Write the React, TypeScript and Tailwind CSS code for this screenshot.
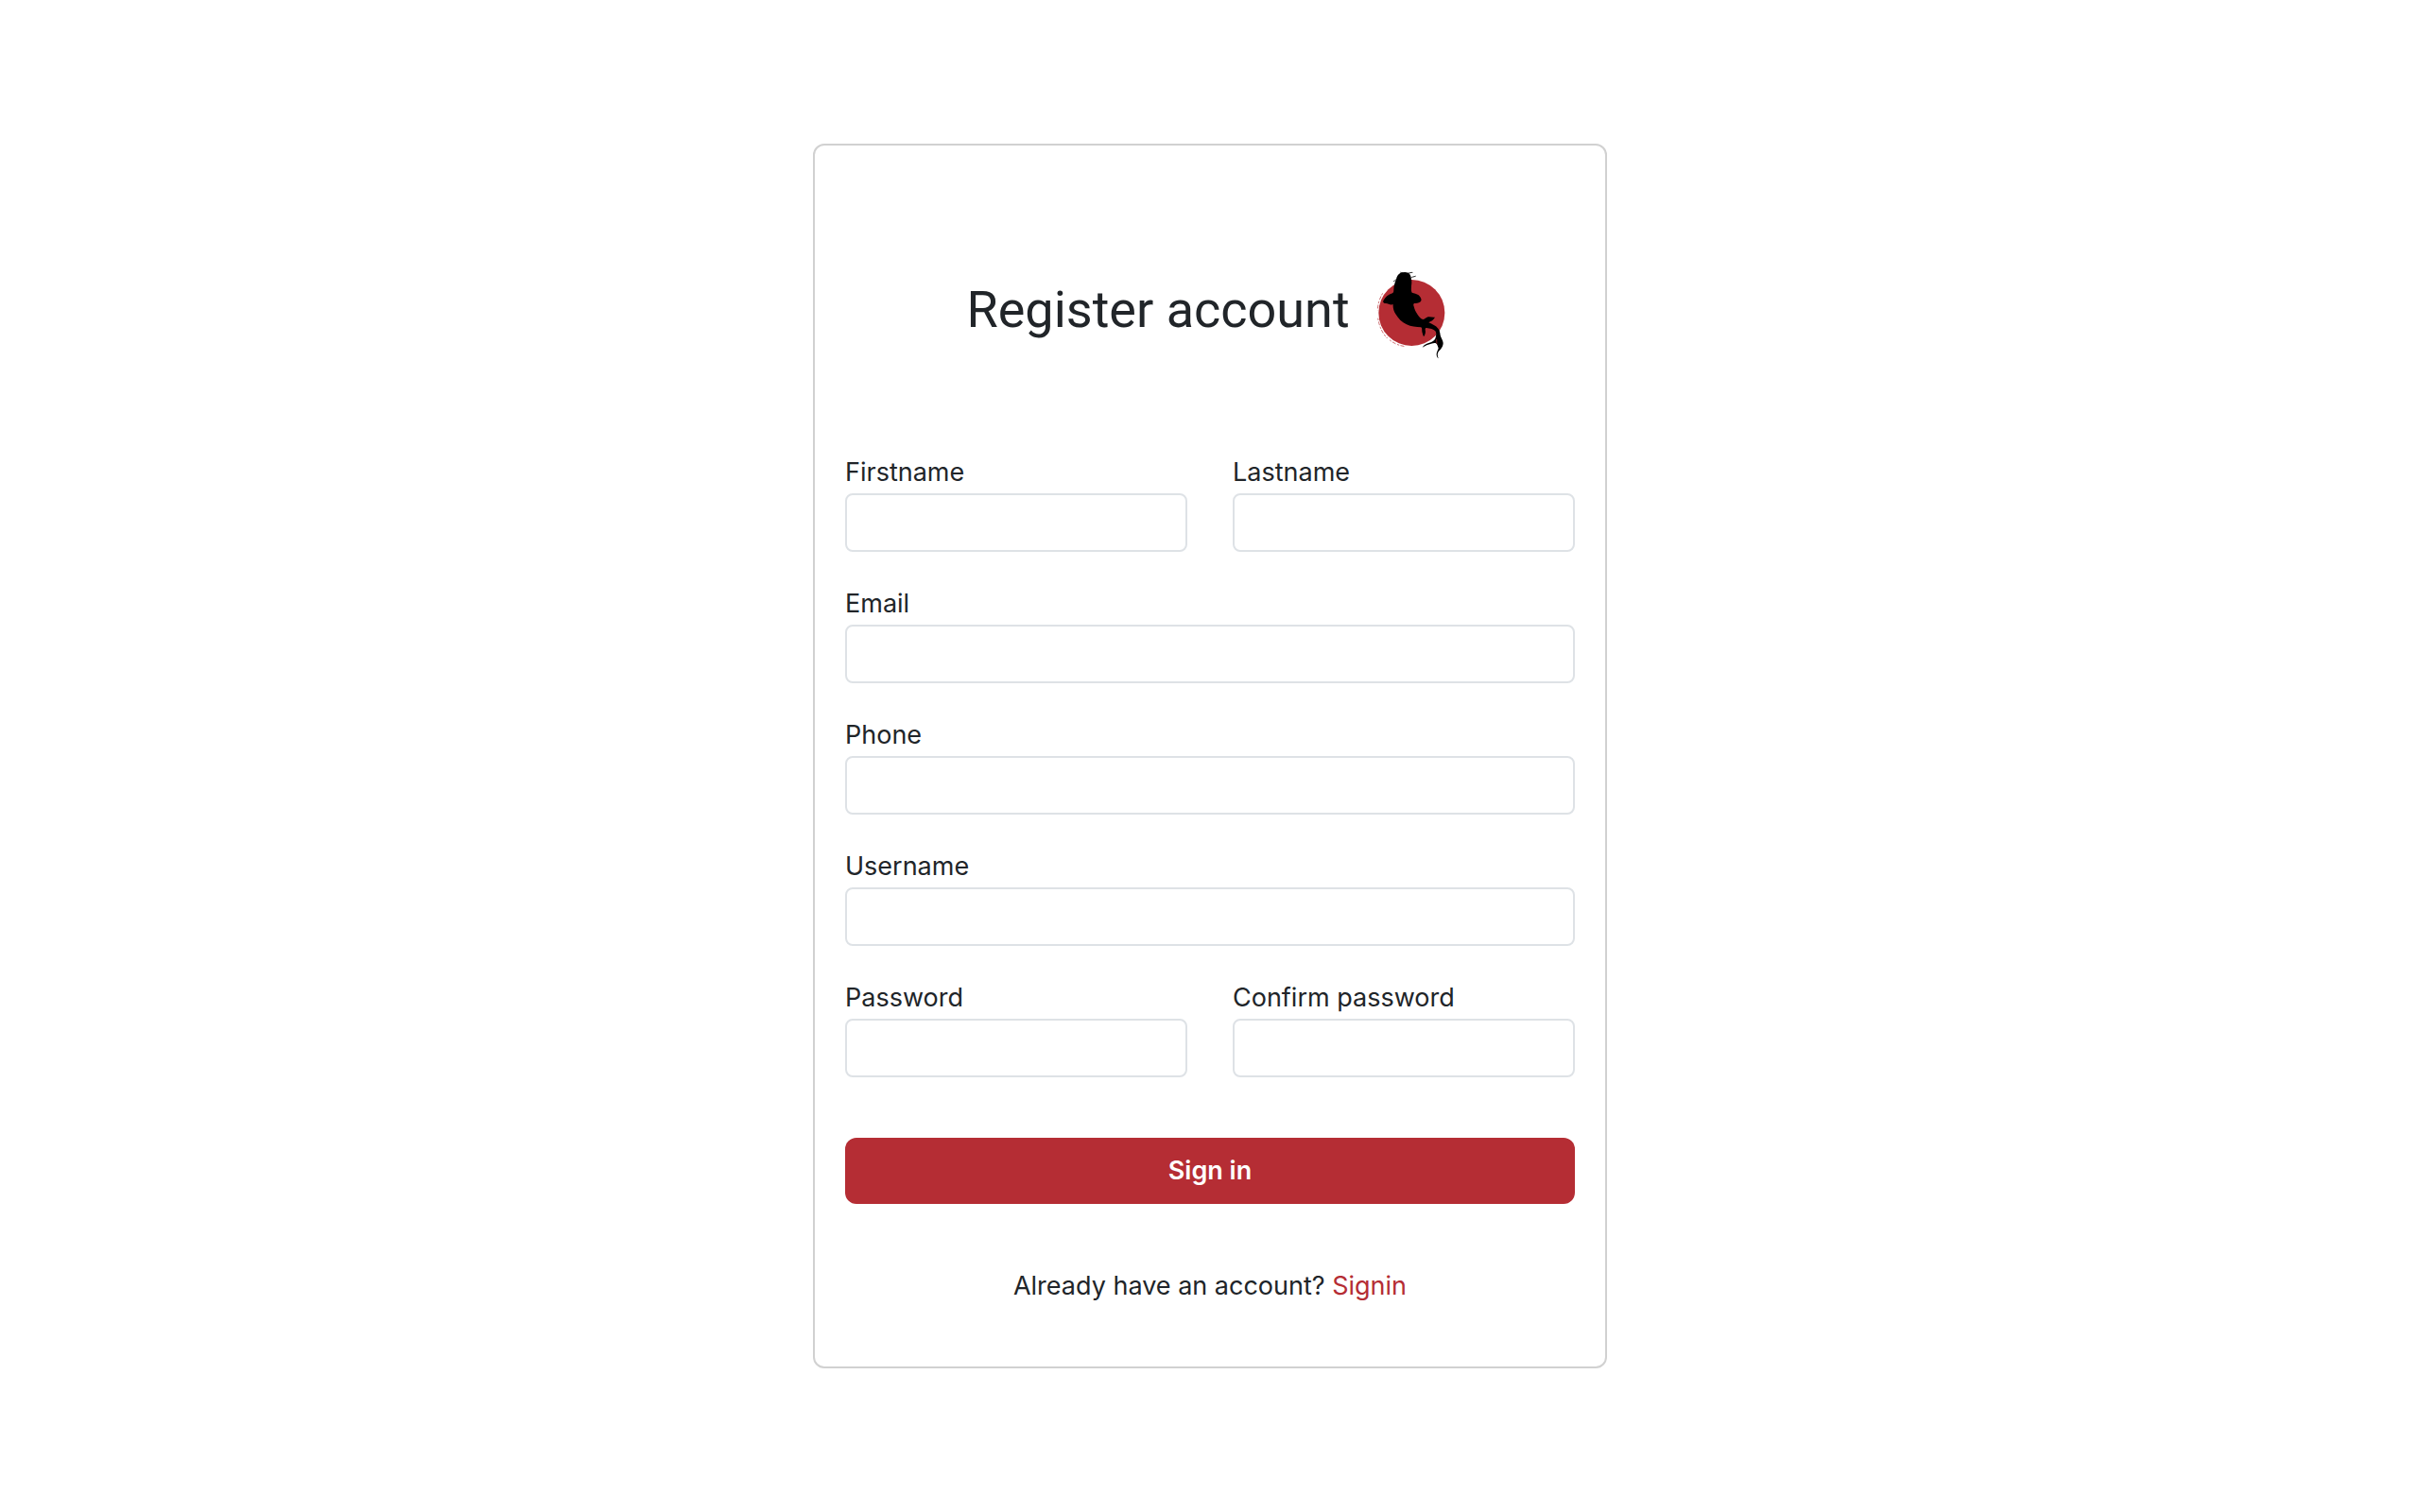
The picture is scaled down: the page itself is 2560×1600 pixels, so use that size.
import type { InputHTMLAttributes } from "react";

type FieldProps = InputHTMLAttributes<HTMLInputElement> & {
  id: string;
  label: string;
};

function Field({ id, label, ...input }: FieldProps) {
  return (
    <div className="flex min-w-0 flex-1 flex-col gap-0.5">
      <label htmlFor={id} className="text-[27px] leading-10">
        {label}
      </label>
      <input
        id={id}
        name={id}
        className="h-[62px] w-full rounded-lg border-2 border-[#dee2e6] bg-white px-4 text-[27px] outline-none focus:border-[#b52d34]"
        {...input}
      />
    </div>
  );
}

function KoiLogo() {
  return (
    <svg viewBox="0 -9 288 336" className="h-28 w-24 shrink-0" role="img" aria-label="Koi logo">
      <ellipse cx="154" cy="168" rx="105" ry="105" fill="#b52d34" />
      <path
        fill="none"
        stroke="#b52d34"
        strokeWidth="2"
        strokeDasharray="7 4 12 5"
        d="M62 106C52 122 46 142 46 160M47 185C51 212 62 235 77 249M84 254C98 266 116 273 135 275"
      />
      <path
        d="M118 42C112 45 106 53 105 62C100 72 97 84 97 96C97 101 96 104 93 106C80 110 69 119 64 130C62 135 66 138 72 138C80 139 88 145 95 141C94 150 97 163 103 172C111 186 123 198 138 205C152 212 168 214 184 214C188 218 186 222 187 228C188 234 190 239 192 244C197 238 199 229 197 222C197 218 198 216 201 216C213 217 223 220 229 226C234 233 231 242 229 250C226 257 219 261 210 263C201 265 193 269 188 278C197 272 206 268 216 266C222 265 227 262 231 265C236 269 237 275 239 281C236 288 232 295 233 302C234 307 236 311 239 313C235 304 235 296 241 289C248 282 254 274 254 264C253 254 247 247 245 239C244 231 243 224 238 218C231 209 219 204 208 199C210 196 216 196 220 192C223 189 226 185 228 182C220 183 213 180 206 181C199 183 196 188 191 189C183 188 178 181 173 174C167 166 163 157 161 148C159 144 159 140 162 138C170 139 181 137 184 130C186 125 182 117 176 112C170 107 162 106 155 104C151 98 153 90 153 82C154 74 155 66 152 59C152 51 149 44 143 41C135 38 125 39 118 42Z"
      />
      <path
        fill="none"
        stroke="#000"
        strokeWidth="2.5"
        strokeLinecap="round"
        d="M128 43C125 40 122 42 119 40M144 42C149 43 151 39 156 40M151 58C156 52 160 55 166 52M105 62C101 65 99 68 97 68"
      />
      <path fill="none" stroke="#b52d34" strokeWidth="2" d="M233 252C232 257 234 261 234 266" />
    </svg>
  );
}

export default function App() {
  return (
    <main className="flex min-h-screen items-center justify-center bg-white font-['Inter',sans-serif] text-[#212529]">
      <section className="w-full max-w-[840px] rounded-xl border-2 border-[#d1d1d1] px-8 pb-16 pt-[118px]">
        <header className="mb-24 flex items-center justify-center gap-3.5">
          <h1 className="font-['Roboto',sans-serif] text-[54px] leading-[68px]">Register account</h1>
          <KoiLogo />
        </header>

        <form className="flex flex-col" onSubmit={(event) => event.preventDefault()}>
          <div className="flex flex-col gap-[35px]">
            <div className="flex gap-12">
              <Field id="firstname" label="Firstname" autoComplete="given-name" />
              <Field id="lastname" label="Lastname" autoComplete="family-name" />
            </div>
            <Field id="email" label="Email" type="email" autoComplete="email" />
            <Field id="phone" label="Phone" type="tel" autoComplete="tel" />
            <Field id="username" label="Username" autoComplete="username" />
            <div className="flex gap-12">
              <Field id="password" label="Password" type="password" autoComplete="new-password" />
              <Field id="confirm-password" label="Confirm password" type="password" autoComplete="new-password" />
            </div>
          </div>
          <button
            type="submit"
            className="mt-16 h-[70px] w-full cursor-pointer rounded-xl bg-[#b52d34] text-[27px] font-semibold text-white"
          >
            Sign in
          </button>
        </form>

        <p className="mt-[66px] text-center text-[27px] leading-[42px]">
          Already have an account?{" "}
          <a href="#signin" className="text-[#b52d34]">
            Signin
          </a>
        </p>
      </section>
    </main>
  );
}
